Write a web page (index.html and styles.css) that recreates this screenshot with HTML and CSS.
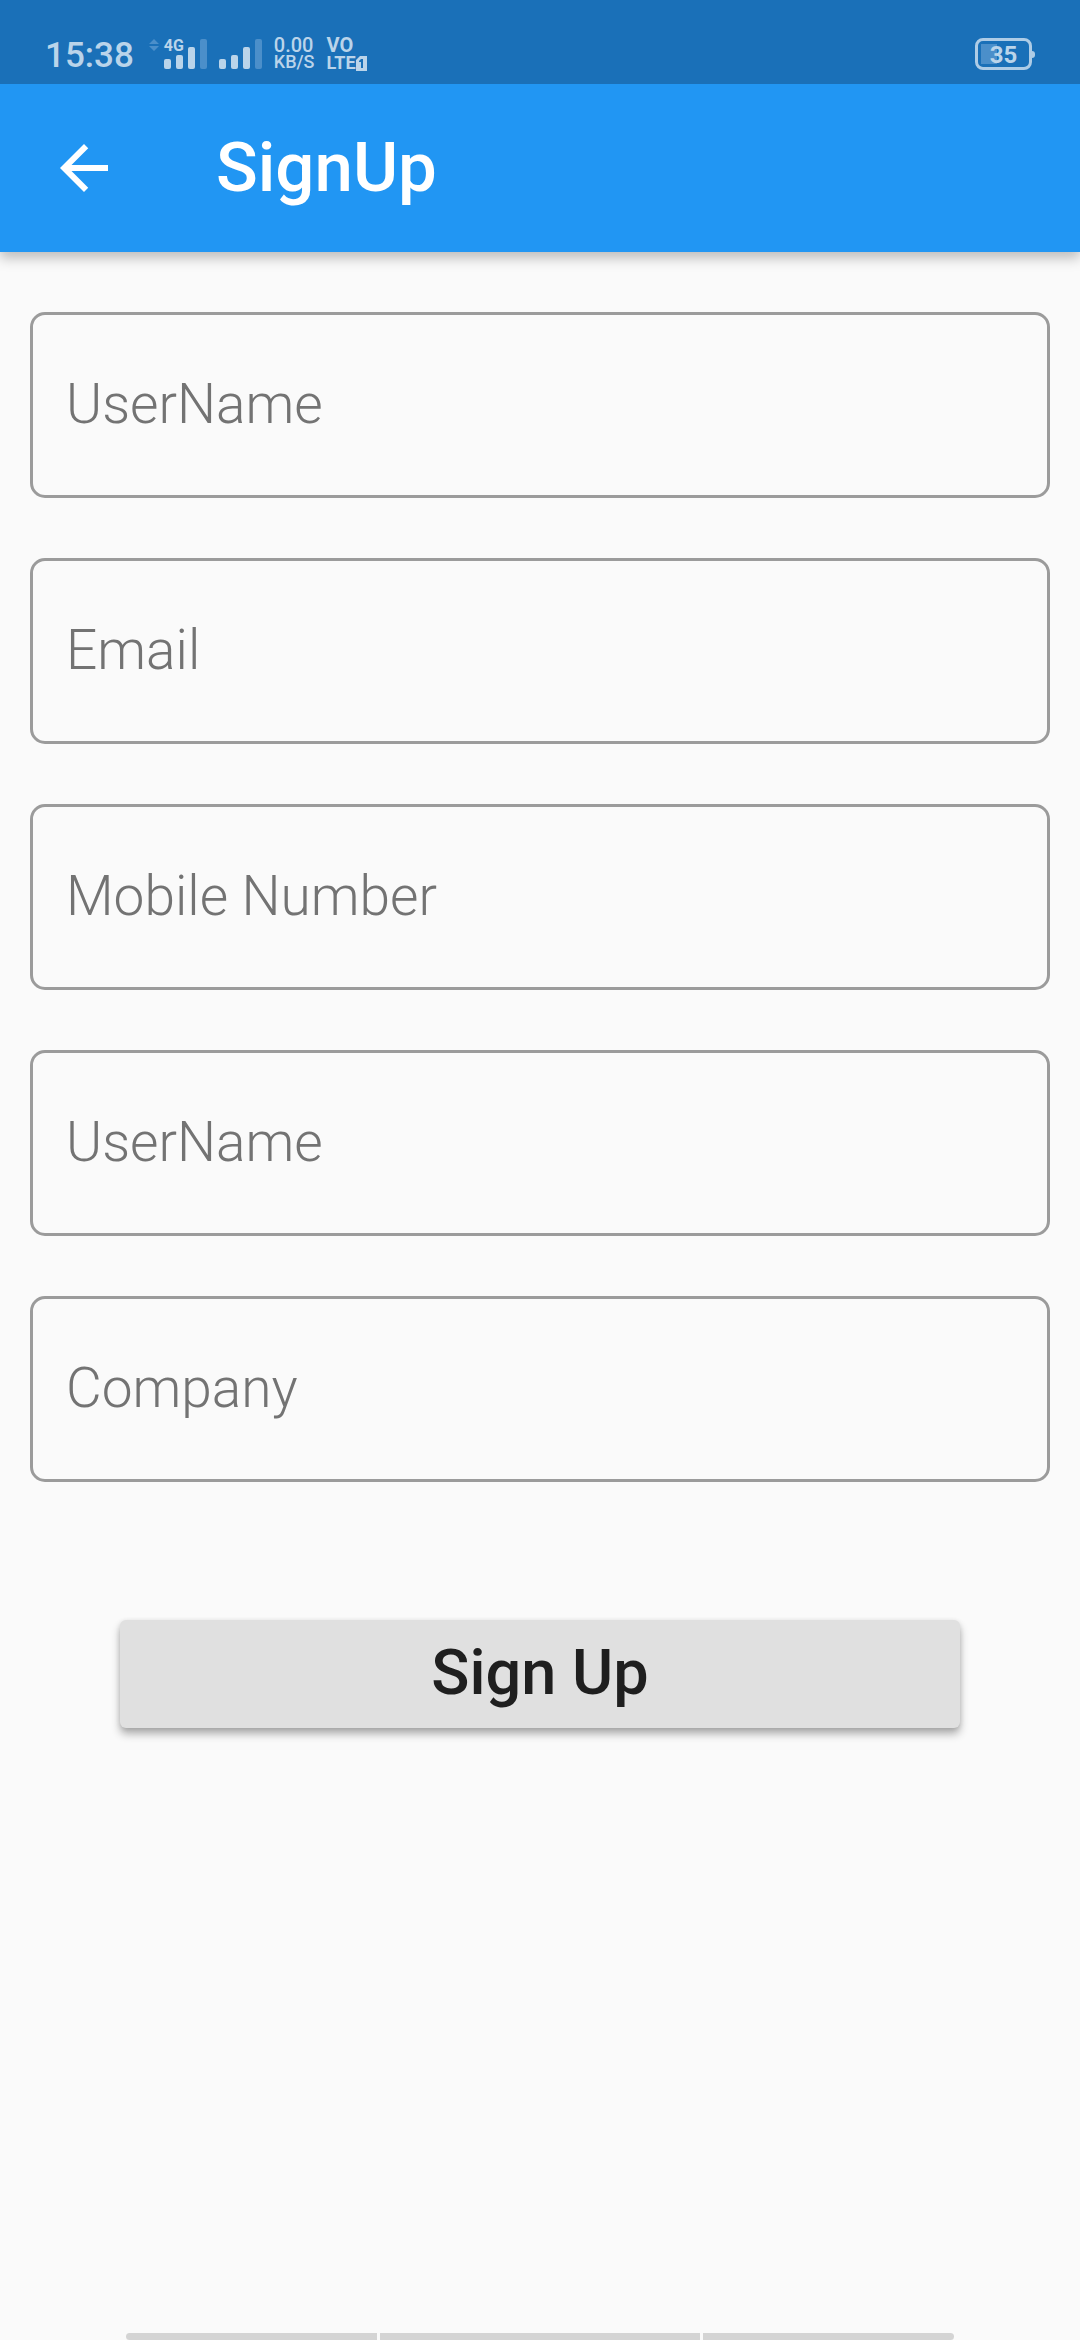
FILE: index.html
```html
<!DOCTYPE html>
<html lang="en">
<head>
  <meta charset="utf-8">
  <meta name="viewport" content="width=device-width, initial-scale=1">
  <title>SignUp</title>
  <link rel="stylesheet" href="styles.css">
</head>
<body>
  <div class="status-bar">
    <span class="clock">15:38</span>
    <svg class="data-arrows" width="10" height="12" viewBox="0 0 10 12" aria-hidden="true"><path d="M5 0l5 5H0zM5 12L0 7h10z"/></svg>
    <div class="cell">
      <div class="cell-low">
        <span class="cell-type">4G</span>
        <svg class="bars" width="19" height="14" viewBox="0 0 19 14" aria-hidden="true">
          <rect x="0" y="4" width="7" height="10" rx="2"/>
          <rect x="12" y="0" width="7" height="14" rx="2"/>
        </svg>
      </div>
      <svg class="bars" width="19" height="30" viewBox="0 0 19 30" aria-hidden="true">
        <rect x="0" y="8" width="7" height="22" rx="2"/>
        <rect class="dim" x="12" y="0" width="7" height="30" rx="2"/>
      </svg>
    </div>
    <div class="cell">
      <svg class="bars" width="43" height="30" viewBox="0 0 43 30" aria-hidden="true">
        <rect x="0" y="20" width="7" height="10" rx="2"/>
        <rect x="12" y="16" width="7" height="14" rx="2"/>
        <rect x="24" y="8" width="7" height="22" rx="2"/>
        <rect class="dim" x="36" y="0" width="7" height="30" rx="2"/>
      </svg>
    </div>
    <div class="speed"><span class="rate">0.00</span><span class="unit">KB/S</span></div>
    <div class="volte">
      <span class="vo">VO</span>
      <span class="lte">LTE<svg width="11" height="15" viewBox="0 0 11 15" aria-hidden="true"><path fill-rule="evenodd" d="M4 0h7v15H0V4zM5 3L3 5v1h2v6h2V3z"/></svg></span>
    </div>
    <div class="battery"><span class="battery-level">35</span></div>
  </div>

  <header class="app-bar">
    <button class="back" type="button" aria-label="Back">
      <svg width="72" height="72" viewBox="0 0 24 24" aria-hidden="true"><path d="M20 11H7.83l5.59-5.59L12 4l-8 8 8 8 1.41-1.41L7.83 13H20z"/></svg>
    </button>
    <h1 class="title">SignUp</h1>
  </header>

  <form class="form">
    <input class="field" type="text" aria-label="UserName" placeholder="UserName">
    <input class="field" type="email" aria-label="Email" placeholder="Email">
    <input class="field" type="tel" aria-label="Mobile Number" placeholder="Mobile Number">
    <input class="field" type="text" aria-label="UserName" placeholder="UserName">
    <input class="field" type="text" aria-label="Company" placeholder="Company">
    <button class="submit" type="button">Sign Up</button>
  </form>

  <div class="gesture-bar"><span></span><span></span><span></span></div>
</body>
</html>
```

FILE: styles.css
```css
* {
  box-sizing: border-box;
}

body {
  margin: 0;
  min-height: 100vh;
  display: flex;
  flex-direction: column;
  background: #fafafa;
  color: #1f1f1f;
  font-family: Roboto, "Noto Sans", sans-serif;
}

/* Status bar, stacked above the app bar's shadow */
.status-bar {
  position: relative;
  z-index: 1;
  display: flex;
  align-items: flex-start;
  height: 84px;
  padding: 36px 45px 0;
  background: #1a70b8;
  color: #bad4ea;
  fill: #bad4ea;
}

.clock {
  font-size: 35px;
  font-weight: 500;
  line-height: 40px;
}

.data-arrows {
  margin: 3px 5px 0 15px;
  fill: #4b8fca;
}

.cell {
  display: flex;
  align-items: flex-end;
  height: 33px;
  margin-right: 12px;
}

.cell-low {
  display: flex;
  flex-direction: column;
  width: 24px;
}

.cell-type {
  font-size: 16px;
  font-weight: 700;
  line-height: 18px;
}

.bars {
  display: block;
}

.dim {
  fill: #4b8fca;
}

.speed,
.volte {
  display: flex;
  flex-direction: column;
  font-weight: 700;
}

.speed {
  margin-right: 12px;
  font-weight: 500;
}

.rate,
.vo {
  font-size: 20px;
  line-height: 18px;
}

.unit {
  font-size: 18px;
  line-height: 16px;
}

.lte {
  display: flex;
  align-items: center;
  font-size: 18px;
  line-height: 18px;
}

.battery {
  position: relative;
  width: 57px;
  height: 32px;
  margin: 2px 3px 0 auto;
  border: 3px solid #aecce6;
  border-radius: 8px;
  background: linear-gradient(#4b8fca, #4b8fca) 3px 3px / 16px 20px no-repeat;
  text-align: center;
}

.battery::after {
  content: "";
  position: absolute;
  top: 10px;
  right: -6px;
  width: 3px;
  height: 7px;
  border-radius: 0 3px 3px 0;
  background: #aecce6;
}

.battery-level {
  display: block;
  font-size: 24px;
  font-weight: 700;
  line-height: 28px;
}

/* App bar */
.app-bar {
  display: flex;
  align-items: center;
  gap: 96px;
  height: 168px;
  padding: 0 48px;
  background: #2196f3;
  color: #fff;
  box-shadow: 0 6px 12px rgba(0, 0, 0, 0.25);
}

.back {
  display: flex;
  padding: 0;
  border: 0;
  background: none;
  fill: #fff;
}

.title {
  margin: 0;
  font-size: 69px;
  font-weight: 500;
  line-height: 80px;
}

/* Form */
.form {
  display: flex;
  flex-direction: column;
  gap: 60px;
  padding: 60px 30px;
}

.field {
  width: 100%;
  height: 186px;
  padding: 0 33px 2px;
  border: 3px solid #9b9b9b;
  border-radius: 15px;
  background: transparent;
  color: #1f1f1f;
  font: 300 55px Roboto, "Noto Sans", sans-serif;
}

.field::placeholder {
  color: #737373;
  opacity: 1;
}

.submit {
  height: 108px;
  margin: 78px 90px 0;
  padding: 0 0 4px;
  border: 0;
  border-radius: 6px;
  background: #e0e0e0;
  color: #1f1f1f;
  font: 500 63px Roboto, "Noto Sans", sans-serif;
  box-shadow: 0 6px 8px rgba(0, 0, 0, 0.3), 0 1px 5px rgba(0, 0, 0, 0.1);
}

/* System gesture hints at the bottom edge */
.gesture-bar {
  display: grid;
  grid-template-columns: 251fr 320fr 251fr;
  gap: 3px;
  height: 7px;
  margin: auto 126px 0;
}

.gesture-bar span {
  background: #d4d4d4;
}

.gesture-bar span:first-child {
  border-radius: 4px 0 0 4px;
}

.gesture-bar span:last-child {
  border-radius: 0 4px 4px 0;
}
```
